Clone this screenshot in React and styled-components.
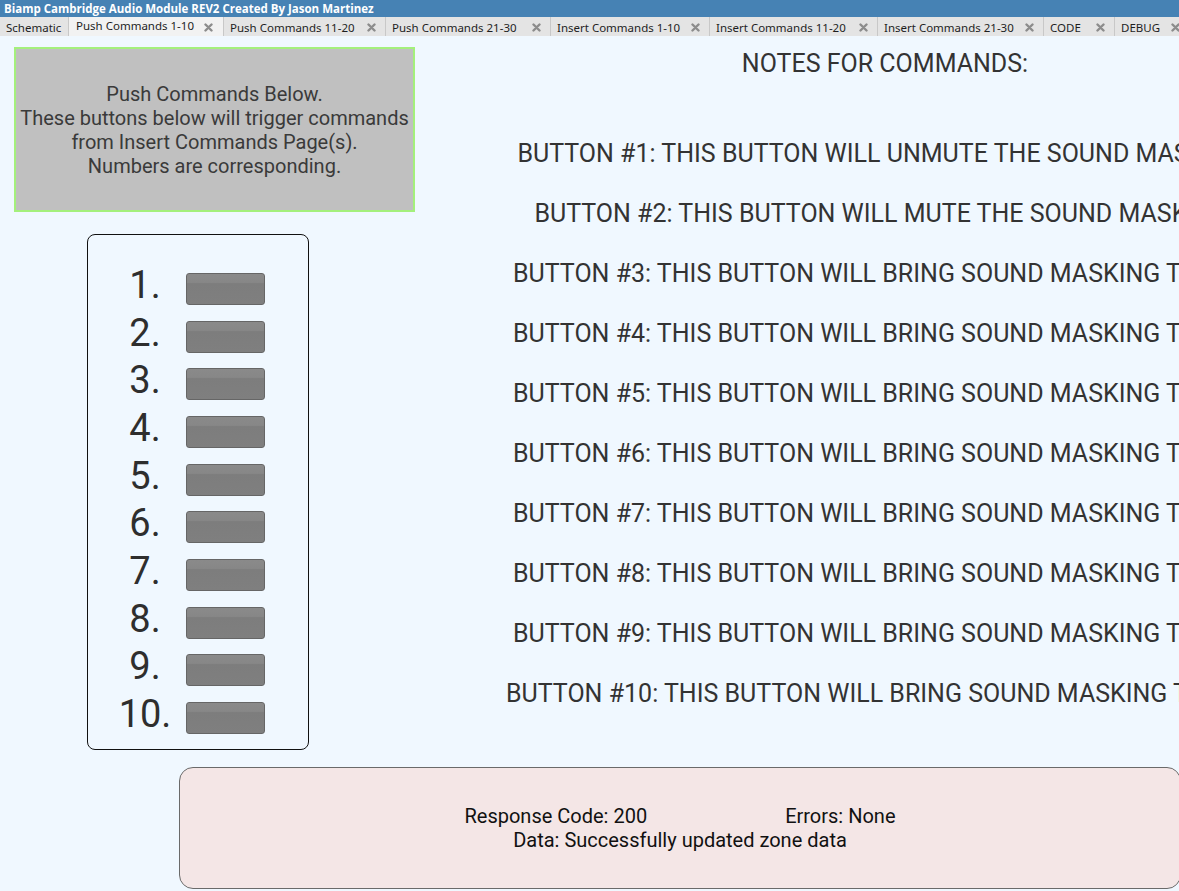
import React from "react";
import styled, { createGlobalStyle } from "styled-components";

const GlobalStyle = createGlobalStyle`
  html, body {
    margin: 0;
    padding: 0;
    overflow: hidden;
    background: #f0f8ff;
  }
  * {
    box-sizing: border-box;
  }
`;

const tabs = [
  { label: "Schematic", width: 69, closable: false },
  { label: "Push Commands 1-10", width: 155, active: true },
  { label: "Push Commands 11-20", width: 162 },
  { label: "Push Commands 21-30", width: 165 },
  { label: "Insert Commands 1-10", width: 159 },
  { label: "Insert Commands 11-20", width: 168 },
  { label: "Insert Commands 21-30", width: 166 },
  { label: "CODE", width: 71 },
  { label: "DEBUG", width: 75 }
];

const notes = [
  "BUTTON #1: THIS BUTTON WILL UNMUTE THE SOUND MASKING.",
  "BUTTON #2: THIS BUTTON WILL MUTE THE SOUND MASKING.",
  "BUTTON #3: THIS BUTTON WILL BRING SOUND MASKING TO 10%.",
  "BUTTON #4: THIS BUTTON WILL BRING SOUND MASKING TO 20%.",
  "BUTTON #5: THIS BUTTON WILL BRING SOUND MASKING TO 30%.",
  "BUTTON #6: THIS BUTTON WILL BRING SOUND MASKING TO 40%.",
  "BUTTON #7: THIS BUTTON WILL BRING SOUND MASKING TO 50%.",
  "BUTTON #8: THIS BUTTON WILL BRING SOUND MASKING TO 60%.",
  "BUTTON #9: THIS BUTTON WILL BRING SOUND MASKING TO 70%.",
  "BUTTON #10: THIS BUTTON WILL BRING SOUND MASKING TO 80%."
];

function CloseIcon() {
  return (
    <svg width="9" height="9" viewBox="0 0 9 9">
      <path
        d="M1.5 1.5 L7.5 7.5 M7.5 1.5 L1.5 7.5"
        stroke="#8c8c8c"
        strokeWidth="2.4"
        strokeLinecap="round"
      />
    </svg>
  );
}

export default function App() {
  return (
    <Page>
      <GlobalStyle />
      <TitleBar>Biamp Cambridge Audio Module REV2 Created By Jason Martinez</TitleBar>
      <TabStrip>
        {tabs.map((t) => (
          <Tab key={t.label} $width={t.width} $active={t.active}>
            <span>{t.label}</span>
            {t.closable !== false && <CloseIcon />}
          </Tab>
        ))}
      </TabStrip>

      <Content>
        <LeftCol>
          <InfoBox>
            Push Commands Below.
            <br />
            These buttons below will trigger commands
            <br />
            from Insert Commands Page(s).
            <br />
            Numbers are corresponding.
          </InfoBox>
          <ButtonPanel>
            {Array.from({ length: 10 }, (_, i) => (
              <ButtonRow key={i}>
                <Num>{i + 1}.</Num>
                <PushButton />
              </ButtonRow>
            ))}
          </ButtonPanel>
        </LeftCol>

        <NotesCol>
          <NotesTitle>NOTES FOR COMMANDS:</NotesTitle>
          <NotesList>
            {notes.map((n) => (
              <NoteLine key={n}>{n}</NoteLine>
            ))}
          </NotesList>
        </NotesCol>
      </Content>

      <ResponseBox>
        <ResponseRow>
          <span>Response Code: 200</span>
          <span>Errors: None</span>
        </ResponseRow>
        <div>Data: Successfully updated zone data</div>
      </ResponseBox>
    </Page>
  );
}

const Page = styled.div`
  width: 1179px;
  height: 891px;
  background: #f0f8ff;
  font-family: Roboto, "Liberation Sans", sans-serif;
  overflow: hidden;
`;

const TitleBar = styled.div`
  height: 17px;
  background: #4682b4;
  color: #fff;
  font-family: "Open Sans", "Noto Sans", sans-serif;
  font-weight: 700;
  font-size: 11.5px;
  line-height: 17px;
  padding-left: 4px;
  white-space: nowrap;
`;

const TabStrip = styled.div`
  display: flex;
  height: 19px;
  background: #e4e4e4;
  white-space: nowrap;
`;

const Tab = styled.div`
  flex: none;
  width: ${(p) => p.$width}px;
  height: 19px;
  display: flex;
  justify-content: space-between;
  align-items: ${(p) => (p.$active ? "flex-start" : "center")};
  padding: ${(p) => (p.$active ? "1px 10px 0 7px" : "1px 9px 0 6px")};
  background: ${(p) => (p.$active ? "#f2f2f2" : "#e4e4e4")};
  border-right: 1px solid #c8c8c8;
  font-family: "Noto Sans", "Open Sans", sans-serif;
  font-size: 11.5px;
  color: #1e1e1e;
  svg {
    align-self: center;
  }
`;

const Content = styled.div`
  display: grid;
  grid-template-columns: 591px 588px;
`;

const LeftCol = styled.div`
  display: flex;
  flex-direction: column;
  padding-top: 11px;
`;

const InfoBox = styled.div`
  margin-left: 14px;
  width: 401px;
  height: 165px;
  background: #c0c0c0;
  border: 2px solid #a4f07c;
  display: flex;
  align-items: center;
  justify-content: center;
  text-align: center;
  font-size: 20px;
  line-height: 24px;
  color: #3a3a3a;
`;

const ButtonPanel = styled.div`
  margin: 22px 0 0 87px;
  width: 222px;
  height: 516px;
  border: 1px solid #111;
  border-radius: 8px;
  padding: 27px 0 0 22px;
`;

const ButtonRow = styled.div`
  display: flex;
  align-items: flex-start;
  height: 47.67px;
`;

const Num = styled.div`
  width: 70px;
  text-align: center;
  font-size: 38px;
  line-height: 47.67px;
  color: #2e2e2e;
`;

const PushButton = styled.button`
  margin: 11px 0 0 6px;
  width: 79px;
  height: 32px;
  padding: 0;
  border: 1px solid #666;
  border-radius: 3px;
  background: linear-gradient(#8a8a8a 0%, #878787 28%, #7d7d7d 32%, #7f7f7f 100%);
`;

const NotesCol = styled.div`
  display: flex;
  flex-direction: column;
  align-items: center;
  white-space: nowrap;
  color: #333;
  font-size: 25px;
`;

const NotesTitle = styled.div`
  line-height: 56px;
`;

const NotesList = styled.div`
  margin-top: 32px;
  display: flex;
  flex-direction: column;
  align-items: center;
`;

const NoteLine = styled.div`
  line-height: 60px;
`;

const ResponseBox = styled.div`
  margin: 17px 0 0 179px;
  width: 1002px;
  height: 122px;
  background: #f4e6e6;
  border: 1px solid #6a6a6a;
  border-radius: 14px;
  display: flex;
  flex-direction: column;
  align-items: center;
  justify-content: center;
  font-size: 20px;
  line-height: 24px;
  color: #111;
`;

const ResponseRow = styled.div`
  display: flex;
  gap: 138px;
`;
